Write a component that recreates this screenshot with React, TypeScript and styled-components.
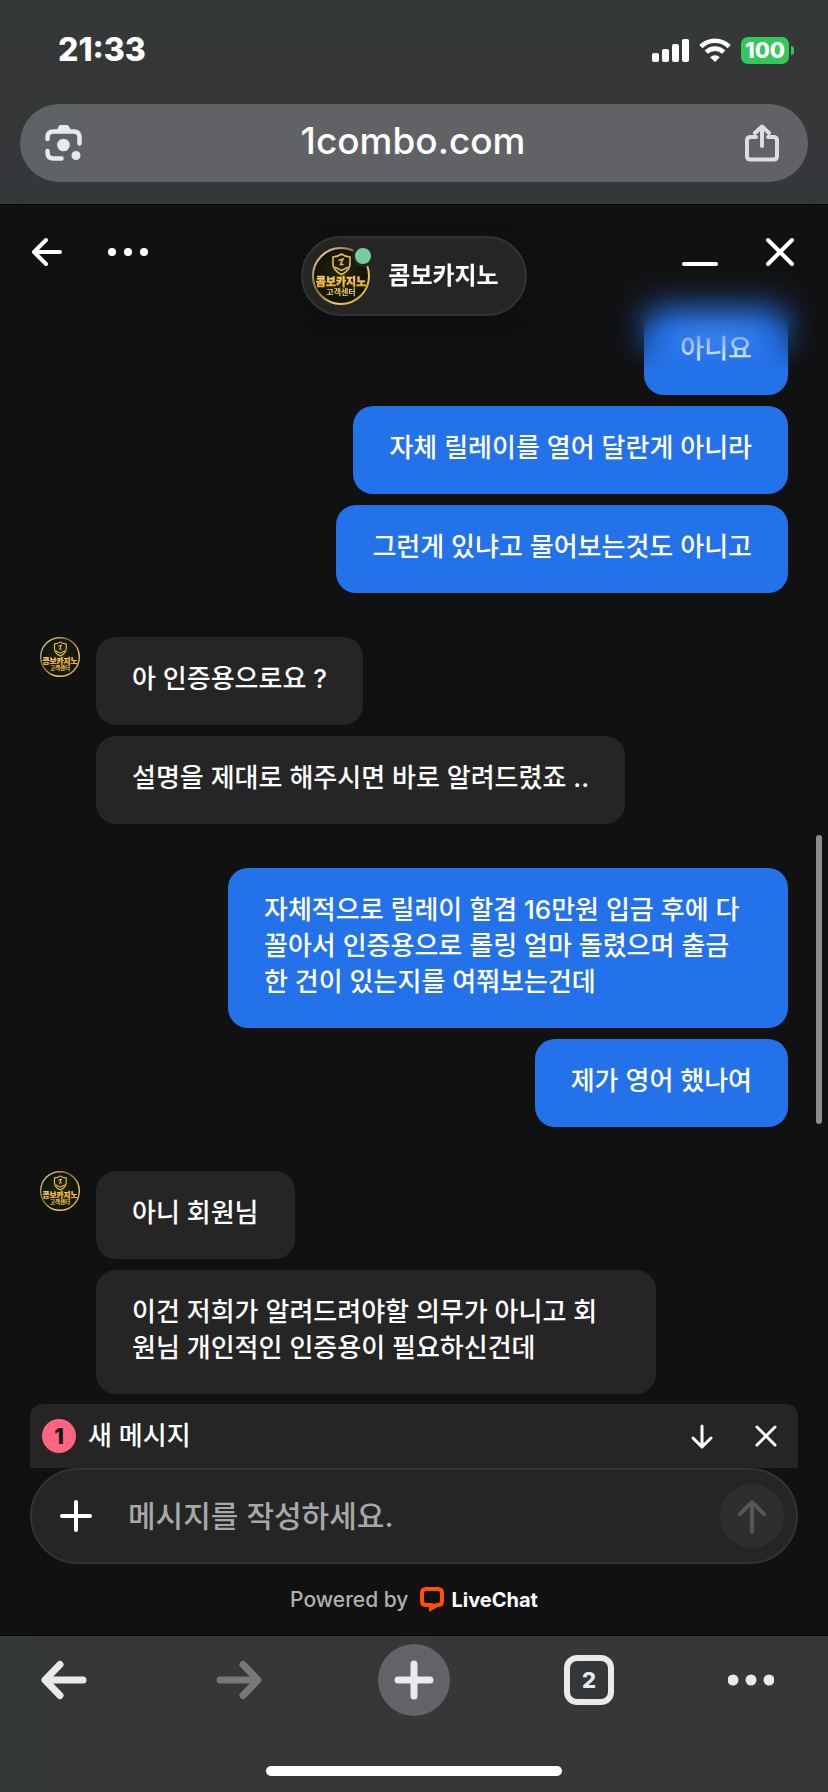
import React from "react";
import styled, { createGlobalStyle } from "styled-components";

const GlobalStyle = createGlobalStyle`
  *, *::before, *::after { box-sizing: border-box; }
  body {
    margin: 0;
    background: #111112;
    color: #fff;
    font-family: Inter, "Noto Sans CJK KR", sans-serif;
  }
  button, input { font: inherit; color: inherit; }
`;

const Screen = styled.div`
  min-height: 100vh;
  display: flex;
  flex-direction: column;
`;

const IconButton = styled.button<{ $w?: number; $h?: number; $align?: string }>`
  display: flex;
  align-items: center;
  justify-content: ${(p) => p.$align ?? "center"};
  width: ${(p) => p.$w ?? 32}px;
  height: ${(p) => p.$h ?? 32}px;
  padding: 0;
  border: 0;
  background: none;
  cursor: pointer;
  svg { display: block; flex: none; }
`;

/* ---------- browser top ---------- */

const BrowserTop = styled.header`
  padding: 0 20px 22px;
  background: linear-gradient(#333937, #363737 50%, #36373a 80%, #35393a);
`;

const StatusBar = styled.div`
  display: flex;
  align-items: center;
  justify-content: space-between;
  height: 104px;
  padding: 0 14px 4px 38px;
`;

const Clock = styled.time`
  font-size: 32px;
  line-height: 40px;
  font-weight: 800;
`;

const StatusIcons = styled.div`
  display: flex;
  align-items: center;
  gap: 10px;
`;

const Battery = styled.div`
  display: flex;
  align-items: center;
  gap: 2px;
`;

const BatteryLevel = styled.span`
  width: 48px;
  height: 27px;
  border-radius: 7px;
  background: #35c759;
  font-size: 22px;
  line-height: 27px;
  font-weight: 800;
  text-align: center;
`;

const BatteryTip = styled.span`
  width: 3px;
  height: 9px;
  border-radius: 0 4px 4px 0;
  background: #35c759;
`;

const AddressBar = styled.div`
  display: flex;
  align-items: center;
  justify-content: space-between;
  height: 78px;
  padding: 0 27px 0 25px;
  border-radius: 39px;
  background: linear-gradient(90deg, #5b6365, #616265 10%, #616265);
`;

const Address = styled.button`
  flex: 1;
  padding: 0 0 4px;
  border: 0;
  background: none;
  font-size: 37px;
  line-height: 44px;
  font-weight: 500;
`;

/* ---------- chat ---------- */

const Chat = styled.main`
  position: relative;
  flex: 1;
  display: flex;
  flex-direction: column;
  border: solid #000;
  border-width: 1px 0;
  background: #111112;
`;

const ChatHeader = styled.div`
  position: absolute;
  inset: 0 0 auto;
  z-index: 2;
  display: grid;
  grid-template-columns: 1fr auto 1fr;
  align-items: start;
  padding: 31px 32px 0;
`;

const HeaderVeil = styled.div`
  position: absolute;
  inset: 0 0 auto;
  z-index: 1;
  height: 180px;
  backdrop-filter: blur(16px);
  mask-image: linear-gradient(#000 62%, transparent 92%);
`;

const HeaderSide = styled.div<{ $end?: boolean }>`
  display: flex;
  justify-content: ${(p) => (p.$end ? "flex-end" : "flex-start")};
  gap: ${(p) => (p.$end ? 46 : 44)}px;
`;

const AgentPill = styled.div`
  display: flex;
  align-items: center;
  gap: 18px;
  height: 80px;
  padding: 0 26px 0 9px;
  border: 2px solid #333334;
  border-radius: 40px;
  background: #252526;
  box-shadow: 0 4px 20px rgba(0, 0, 0, 0.2);
`;

const AgentName = styled.h1`
  margin: 0;
  font-size: 24px;
  line-height: 32px;
  font-weight: 700;
`;

const AvatarBox = styled.div<{ $size: number }>`
  position: relative;
  flex: none;
  width: ${(p) => p.$size}px;
  height: ${(p) => p.$size}px;
  svg { display: block; width: 100%; height: 100%; }
`;

const OnlineDot = styled.span`
  position: absolute;
  top: -2px;
  right: -4px;
  width: 22px;
  height: 22px;
  border: 3px solid #252526;
  border-radius: 50%;
  background: #7acd9f;
`;

const Messages = styled.div`
  flex: 1;
  display: flex;
  flex-direction: column;
  gap: 44px;
  padding: 102px 40px 10px;
`;

const Group = styled.section<{ $mine?: boolean }>`
  display: flex;
  gap: 16px;
  justify-content: ${(p) => (p.$mine ? "flex-end" : "flex-start")};
`;

const Stack = styled.div<{ $mine?: boolean }>`
  display: flex;
  flex-direction: column;
  align-items: ${(p) => (p.$mine ? "flex-end" : "flex-start")};
  gap: 11px;
`;

const Bubble = styled.p<{ $mine?: boolean }>`
  margin: 0;
  max-width: 560px;
  padding: 24px 36px 28px;
  border-radius: 20px;
  background: ${(p) => (p.$mine ? "#2472e9" : "#252526")};
  font-size: 26px;
  line-height: 36px;
  font-weight: 500;
`;

const ScrollThumb = styled.span`
  position: absolute;
  top: 630px;
  right: 6px;
  width: 6px;
  height: 289px;
  border-radius: 3px;
  background: #8b8b8c;
`;

const ComposerArea = styled.div`
  padding: 0 30px;
`;

const NewMessageBar = styled.div`
  display: flex;
  align-items: center;
  height: 64px;
  padding: 0 16px 0 12px;
  border-radius: 12px 12px 0 0;
  background: #252526;
`;

const Count = styled.span`
  width: 34px;
  height: 34px;
  margin-right: 12px;
  border-radius: 50%;
  background: #ff6480;
  color: #111112;
  font-size: 22px;
  line-height: 34px;
  font-weight: 800;
  text-align: center;
`;

const NewMessageText = styled.span`
  flex: 1;
  font-size: 26px;
  line-height: 36px;
  font-weight: 500;
`;

const NewMessageActions = styled.div`
  display: flex;
  gap: 32px;
`;

const Composer = styled.form`
  display: flex;
  align-items: center;
  height: 96px;
  padding: 0 12px 0 28px;
  border: 2px solid #333334;
  border-radius: 48px;
  background: #252526;
`;

const MessageInput = styled.input`
  flex: 1;
  min-width: 0;
  height: 56px;
  margin-left: 36px;
  padding: 0;
  border: 0;
  outline: 0;
  background: none;
  font-size: 30px;
  font-weight: 500;
  &::placeholder { color: #a8a8a9; opacity: 1; }
`;

const SendButton = styled(IconButton)`
  border-radius: 50%;
  background: #2e2e2f;
`;

const Powered = styled.footer`
  display: flex;
  align-items: center;
  justify-content: center;
  height: 71px;
  gap: 12px;
  color: #b0b0b1;
  font-size: 21px;
  line-height: 28px;
  font-weight: 500;
`;

const BrandLink = styled.a`
  display: flex;
  align-items: center;
  gap: 7px;
  color: #fff;
  font-size: 20px;
  font-weight: 700;
  text-decoration: none;
`;

/* ---------- browser bottom ---------- */

const BrowserBottom = styled.footer`
  display: flex;
  flex-direction: column;
  align-items: center;
  padding: 8px 28px 16px;
  background: linear-gradient(90deg, #343937, #363739 8%);
`;

const Toolbar = styled.nav`
  display: flex;
  justify-content: space-between;
  width: 100%;
  margin-bottom: 50px;
`;

const NewTabButton = styled(IconButton)`
  border-radius: 50%;
  background: #626366;
`;

const TabCount = styled.span`
  width: 50px;
  height: 50px;
  border: 6px solid #e9eaec;
  border-radius: 13px;
  color: #e9eaec;
  font-size: 22px;
  line-height: 38px;
  font-weight: 800;
  text-align: center;
`;

const HomeIndicator = styled.div`
  width: 296px;
  height: 10px;
  border-radius: 5px;
  background: #fff;
`;

type LineIconProps = { w: number; h: number; d: string; sw: number; color?: string };

const LineIcon = ({ w, h, d, sw, color = "#fff" }: LineIconProps) => (
  <svg width={w} height={h} viewBox={`0 0 ${w} ${h}`} fill="none" stroke={color} strokeWidth={sw} strokeLinecap="round" strokeLinejoin="round" aria-hidden="true">
    <path d={d} />
  </svg>
);

const Dots = ({ w, r, gap, color }: { w: number; r: number; gap: number; color: string }) => (
  <svg width={w} height={16} viewBox={`0 0 ${w} 16`} fill={color} aria-hidden="true">
    {[-1, 0, 1].map((i) => (
      <circle key={i} cx={w / 2 + i * gap} cy={8} r={r} />
    ))}
  </svg>
);

const Emblem = ({ id }: { id: string }) => (
  <svg viewBox="0 0 58 58" role="img" aria-label="콤보카지노 고객센터">
    <defs>
      <linearGradient id={`${id}-ring`} x1="0" y1="0" x2="1" y2="1">
        <stop offset="0" stopColor="#fff0b8" />
        <stop offset="0.4" stopColor="#8a6a2c" />
        <stop offset="0.7" stopColor="#f3cf6a" />
        <stop offset="1" stopColor="#b98f35" />
      </linearGradient>
      <linearGradient id={`${id}-gold`} x1="0" y1="0" x2="0" y2="1">
        <stop offset="0" stopColor="#ffe680" />
        <stop offset="1" stopColor="#e39a2c" />
      </linearGradient>
      <radialGradient id={`${id}-bg`}>
        <stop offset="0" stopColor="#272509" />
        <stop offset="1" stopColor="#101508" />
      </radialGradient>
    </defs>
    <circle cx="29" cy="29" r="28" fill={`url(#${id}-bg)`} stroke={`url(#${id}-ring)`} strokeWidth="2" />
    <path d="M29.500 7Q33.500 10 38 10V17Q38 23.500 29.500 27.500Q21 23.500 21 17V10Q25.500 10 29.500 7Z" fill="none" stroke="#e8bd4b" strokeWidth="1.600" />
    <path d="M26.500 13.500L31 12L28.500 17.500H31.500M22.500 20L29.500 23.500L36.500 20" fill="none" stroke="#e8bd4b" strokeWidth="1.500" />
    <text x="29" y="39" textAnchor="middle" fontFamily="'Noto Sans CJK KR', sans-serif" fontSize="11" fontWeight="900" fill={`url(#${id}-gold)`} stroke="#eeb843" strokeWidth="0.300">
      콤보카지노
    </text>
    <text x="29" y="48" textAnchor="middle" fontFamily="'Noto Sans CJK KR', sans-serif" fontSize="8" fontWeight="700" fill="#f1cf62">
      고객센터
    </text>
  </svg>
);

type Thread = { mine?: boolean; texts: string[] };

const threads: Thread[] = [
  { mine: true, texts: ["아니요", "자체 릴레이를 열어 달란게 아니라", "그런게 있냐고 물어보는것도 아니고"] },
  { texts: ["아 인증용으로요 ?", "설명을 제대로 해주시면 바로 알려드렸죠 .."] },
  {
    mine: true,
    texts: [
      "자체적으로 릴레이 할겸 16만원 입금 후에 다 꼴아서 인증용으로 롤링 얼마 돌렸으며 출금한 건이 있는지를 여쭤보는건데",
      "제가 영어 했나여",
    ],
  },
  { texts: ["아니 회원님", "이건 저희가 알려드려야할 의무가 아니고 회원님 개인적인 인증용이 필요하신건데"] },
];

export default function App() {
  return (
    <Screen>
      <GlobalStyle />
      <BrowserTop>
        <StatusBar>
          <Clock>21:33</Clock>
          <StatusIcons>
            <svg width="37" height="23" viewBox="0 0 37 23" fill="#fff" aria-hidden="true">
              <rect x="0" y="14" width="7" height="9" rx="2" />
              <rect x="10" y="10" width="7" height="13" rx="2" />
              <rect x="20" y="5" width="7" height="18" rx="2" />
              <rect x="30" y="0" width="7" height="23" rx="2" />
            </svg>
            <svg width="32" height="24" viewBox="0 0 32 24" fill="none" stroke="#fff" strokeWidth="4.600" aria-hidden="true">
              <path d="M1.800 8.600A20 20 0 0 1 30.200 8.600" />
              <path d="M7.300 14.200A12.300 12.300 0 0 1 24.700 14.200" />
              <path d="M16 24L11.200 19.200A7 7 0 0 1 20.800 19.200Z" fill="#fff" stroke="none" />
            </svg>
            <Battery>
              <BatteryLevel>100</BatteryLevel>
              <BatteryTip />
            </Battery>
          </StatusIcons>
        </StatusBar>
        <AddressBar>
          <IconButton $w={38} $h={38} aria-label="렌즈 검색">
            <svg width="38" height="38" viewBox="0 0 38 38" fill="none" stroke="#e6eaec" strokeWidth="4.500" strokeLinecap="round" aria-hidden="true">
              <path d="M2.500 15V13.500Q2.500 7.500 8.500 7.500H28.500Q34.500 7.500 34.500 13.500V19.500" />
              <path d="M2.500 27V28.500Q2.500 34.500 8.500 34.500H16.500" />
              <path d="M12 6L13.500 2.500Q14 1 15.500 1H22Q23.500 1 24 2.500L26 6Z" fill="#e6eaec" stroke="none" />
              <circle cx="18.500" cy="21" r="6.300" fill="#e6eaec" stroke="none" />
              <circle cx="31" cy="31.500" r="4.500" fill="#e6eaec" stroke="none" />
            </svg>
          </IconButton>
          <Address type="button">1combo.com</Address>
          <IconButton $w={38} $h={38} aria-label="공유">
            <LineIcon w={36} h={38} sw={4} color="#dcdde0" d="M12 13H6.500Q3 13 3 16.500V32Q3 35.500 6.500 35.500H29.500Q33 35.500 33 32V16.500Q33 13 29.500 13H24M18 22V3M11 9L18 2.500L25 9" />
          </IconButton>
        </AddressBar>
      </BrowserTop>

      <Chat>
        <ChatHeader>
          <HeaderSide>
            <IconButton aria-label="뒤로">
              <LineIcon w={32} h={32} sw={4} d="M28 16H2.500M14 4L2 16L14 28" />
            </IconButton>
            <IconButton $w={40} aria-label="메뉴">
              <Dots w={40} r={4} gap={16} color="#fff" />
            </IconButton>
          </HeaderSide>
          <AgentPill>
            <AvatarBox $size={58}>
              <Emblem id="agent" />
              <OnlineDot />
            </AvatarBox>
            <AgentName>콤보카지노</AgentName>
          </AgentPill>
          <HeaderSide $end>
            <IconButton $w={36} aria-label="최소화">
              <LineIcon w={36} h={32} sw={4} d="M2 28H34" />
            </IconButton>
            <IconButton aria-label="닫기">
              <LineIcon w={32} h={32} sw={4} d="M4 4L28 28M28 4L4 28" />
            </IconButton>
          </HeaderSide>
        </ChatHeader>
        <HeaderVeil />

        <Messages>
          {threads.map((t, i) => (
            <Group key={i} $mine={t.mine}>
              {!t.mine && (
                <AvatarBox $size={40}>
                  <Emblem id={`thread-${i}`} />
                </AvatarBox>
              )}
              <Stack $mine={t.mine}>
                {t.texts.map((text) => (
                  <Bubble key={text} $mine={t.mine}>{text}</Bubble>
                ))}
              </Stack>
            </Group>
          ))}
        </Messages>
        <ScrollThumb />

        <ComposerArea>
          <NewMessageBar>
            <Count>1</Count>
            <NewMessageText>새 메시지</NewMessageText>
            <NewMessageActions>
              <IconButton aria-label="아래로 이동">
                <LineIcon w={32} h={32} sw={3} d="M16 6V27M7 18L16 27L25 18" />
              </IconButton>
              <IconButton aria-label="알림 닫기">
                <LineIcon w={32} h={32} sw={3} d="M7 7L25 25M25 7L7 25" />
              </IconButton>
            </NewMessageActions>
          </NewMessageBar>
          <Composer onSubmit={(e) => e.preventDefault()}>
            <IconButton type="button" aria-label="첨부">
              <LineIcon w={32} h={32} sw={4} d="M16 2V30M2 16H30" />
            </IconButton>
            <MessageInput type="text" aria-label="메시지" placeholder="메시지를 작성하세요." />
            <SendButton $w={64} $h={64} type="submit" aria-label="보내기">
              <LineIcon w={32} h={36} sw={4} color="#565657" d="M16 34V4M4 16L16 4L28 16" />
            </SendButton>
          </Composer>
        </ComposerArea>
        <Powered>
          <span>Powered by</span>
          <BrandLink href="#livechat">
            <svg width="24" height="25" viewBox="0 0 24 25" aria-hidden="true">
              <path d="M6 2H18Q22 2 22 6V14Q22 18 18 18H17L11 21V18H6Q2 18 2 14V6Q2 2 6 2Z" fill="none" stroke="#ff5100" strokeWidth="4" />
              <path d="M9 17V25L17 20V17Z" fill="#ff5100" />
            </svg>
            LiveChat
          </BrandLink>
        </Powered>
      </Chat>

      <BrowserBottom>
        <Toolbar>
          <IconButton $w={72} $h={72} aria-label="이전 페이지">
            <LineIcon w={46} h={40} sw={7} color="#e9eaec" d="M42 20H5M19 4.500L4 20L19 35.500" />
          </IconButton>
          <IconButton $w={72} $h={72} aria-label="다음 페이지">
            <LineIcon w={46} h={40} sw={7} color="#77787a" d="M4 20H41M27 4.500L42 20L27 35.500" />
          </IconButton>
          <NewTabButton $w={72} $h={72} aria-label="새 탭">
            <LineIcon w={40} h={40} sw={7} color="#e9eaec" d="M20 4V36M4 20H36" />
          </NewTabButton>
          <IconButton $w={72} $h={72} aria-label="탭 2개">
            <TabCount>2</TabCount>
          </IconButton>
          <IconButton $w={72} $h={72} $align="flex-start" aria-label="더보기">
            <Dots w={46} r={5.5} gap={18} color="#e9eaec" />
          </IconButton>
        </Toolbar>
        <HomeIndicator />
      </BrowserBottom>
    </Screen>
  );
}
